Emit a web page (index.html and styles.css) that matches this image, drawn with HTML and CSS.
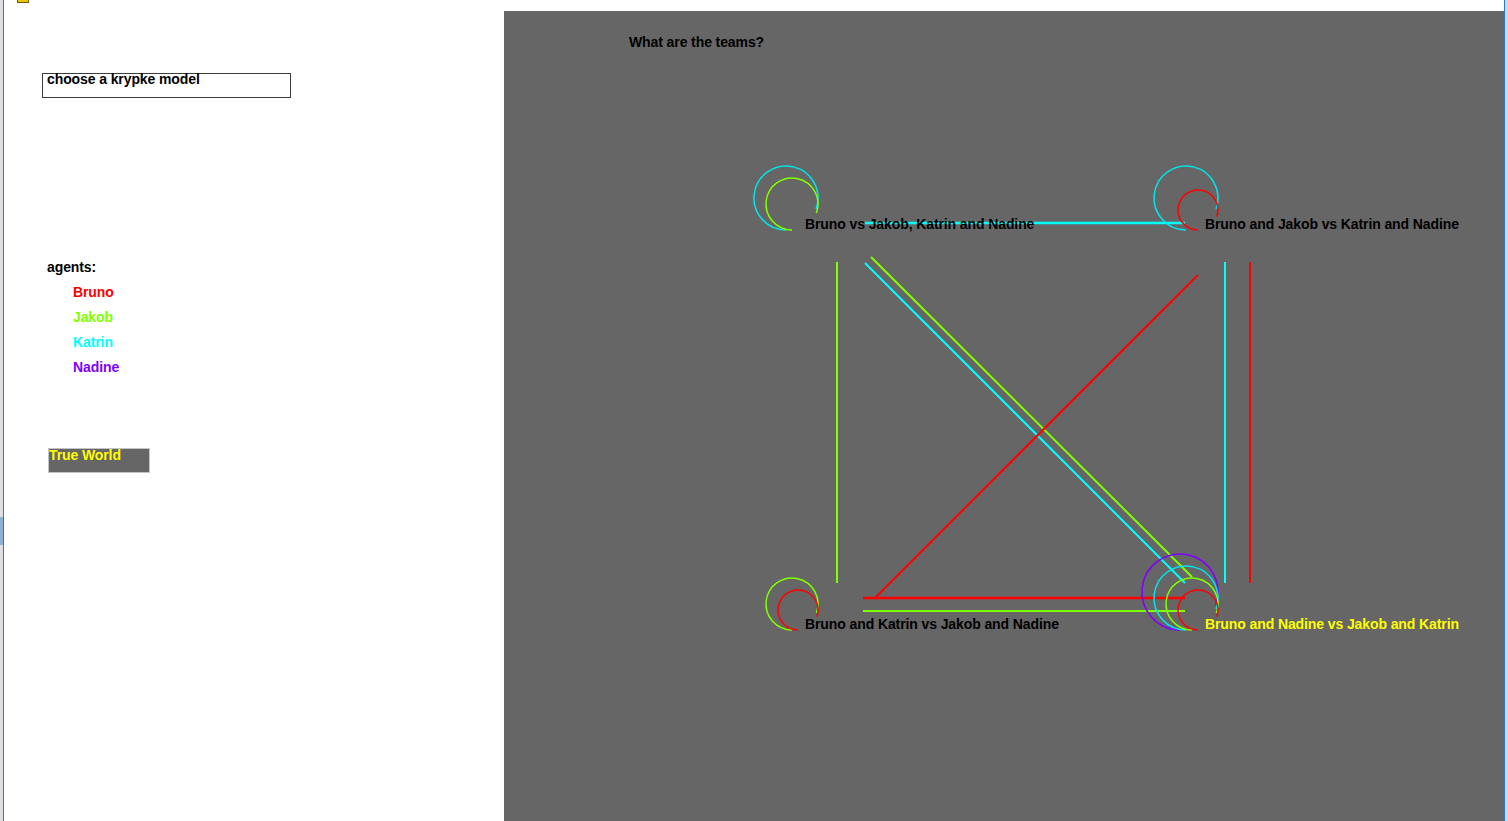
FILE: index.html
```html
<!DOCTYPE html>
<html>
<head>
<meta charset="utf-8">
<title>Krypke model</title>
<link rel="stylesheet" href="styles.css">
</head>
<body>
<div class="window">
  <div class="frame-left">
    <div class="frame-spacer"></div>
    <div class="frame-mark"></div>
  </div>
  <div class="sidebar">
    <div class="app-icon"></div>
    <div class="model-select">choose a krypke model</div>
    <div class="agents">
      <div class="agents-title">agents:</div>
      <ul class="agent-list">
        <li class="agent bruno">Bruno</li>
        <li class="agent jakob">Jakob</li>
        <li class="agent katrin">Katrin</li>
        <li class="agent nadine">Nadine</li>
      </ul>
    </div>
    <div class="true-world">True World</div>
  </div>
  <div class="stage">
    <div class="question">What are the teams?</div>
    <div class="canvas">
      <svg class="edges" width="1000" height="810" viewBox="0 0 1000 810">
        <g stroke-width="2" fill="none">
          <line x1="361" y1="212" x2="681" y2="212" stroke="#00ffff" stroke-width="2.5"/>
          <line x1="333" y1="251" x2="333" y2="572" stroke="#80ff00"/>
          <line x1="721" y1="251" x2="721" y2="572" stroke="#00ffff"/>
          <line x1="746" y1="251" x2="746" y2="572" stroke="#ff0000"/>
          <line x1="359" y1="587" x2="681" y2="587" stroke="#ff0000" stroke-width="2.5"/>
          <line x1="359" y1="600" x2="681" y2="600" stroke="#80ff00"/>
          <line x1="361" y1="252" x2="681" y2="572" stroke="#00ffff"/>
          <line x1="367" y1="246" x2="688" y2="566" stroke="#80ff00"/>
          <line x1="694" y1="264" x2="371" y2="587" stroke="#ff0000"/>
        </g>
        <g stroke-width="1.5" fill="none">
          <path d="M 282 219 A 32 32 0 1 1 312.07 197.94" stroke="#00e5ee"/>
          <path d="M 288 219 A 26 26 0 1 1 312.43 201.89" stroke="#80ff00"/>
          <path d="M 682 219 A 32 32 0 1 1 712.07 197.94" stroke="#00e5ee"/>
          <path d="M 694 219 A 20 20 0 1 1 712.79 205.84" stroke="#ff0000"/>
          <path d="M 288 619 A 26 26 0 1 1 312.43 601.89" stroke="#80ff00"/>
          <path d="M 294 619 A 20 20 0 1 1 312.79 605.84" stroke="#ff0000"/>
          <path d="M 676 619 A 38 38 0 1 1 711.71 594" stroke="#8000ff"/>
          <path d="M 682 619 A 32 32 0 1 1 712.07 597.94" stroke="#00e5ee"/>
          <path d="M 688 619 A 26 26 0 1 1 712.43 601.89" stroke="#80ff00"/>
          <path d="M 694 619 A 20 20 0 1 1 712.79 605.84" stroke="#ff0000"/>
        </g>
      </svg>
      <div class="world w-top-left">Bruno vs Jakob, Katrin and Nadine</div>
      <div class="world w-top-right">Bruno and Jakob vs Katrin and Nadine</div>
      <div class="world w-bottom-left">Bruno and Katrin vs Jakob and Nadine</div>
      <div class="world w-bottom-right actual">Bruno and Nadine vs Jakob and Katrin</div>
    </div>
  </div>
  <div class="frame-right"></div>
</div>
</body>
</html>
```

FILE: styles.css
```css
html, body {
  margin: 0;
  padding: 0;
  background: #ffffff;
}

body {
  font-family: "Liberation Sans", Arial, sans-serif;
  font-weight: bold;
  font-size: 14px;
  letter-spacing: -0.1px;
  color: #000;
  overflow: hidden;
}

.window {
  display: flex;
  width: 1508px;
  height: 821px;
}

.frame-left {
  width: 3px;
  border-right: 1px solid #2a78d0;
  background: #dedfe2;
  display: flex;
  flex-direction: column;
}

.frame-spacer {
  height: 517px;
}

.frame-mark {
  height: 28px;
  background: #8fb0d4;
}

.sidebar {
  width: 500px;
  background: #ffffff;
  display: flex;
  flex-direction: column;
  align-items: flex-start;
}

.app-icon {
  margin-left: 13px;
  width: 10px;
  height: 2px;
  background: #e8c800;
  border: 1px solid #6b5a00;
  border-top: none;
  box-sizing: content-box;
}

.model-select {
  margin-top: 70px;
  margin-left: 38px;
  width: 249px;
  height: 25px;
  box-sizing: border-box;
  border: 1.5px solid #3c3c3c;
  padding-left: 4px;
  line-height: 11px;
  white-space: nowrap;
}

.agents {
  margin-top: 157px;
  margin-left: 43px;
}

.agents-title {
  line-height: 25px;
}

.agent-list {
  list-style: none;
  margin: 0;
  padding: 0 0 0 26px;
}

.agent {
  line-height: 25px;
}

.bruno { color: #ff0000; }
.jakob { color: #80ff00; }
.katrin { color: #00ffff; }
.nadine { color: #8000ff; }

.true-world {
  margin-top: 68px;
  margin-left: 44px;
  width: 102px;
  height: 25px;
  box-sizing: border-box;
  background: #666666;
  border: 1px solid #c4c4c4;
  color: #ffff00;
  line-height: 12px;
  white-space: nowrap;
}

.stage {
  position: relative;
  margin-top: 11px;
  width: 1000px;
  height: 810px;
  background: #666666;
}

.question {
  padding-top: 24px;
  padding-left: 125px;
  line-height: 14px;
}

.canvas {
  position: absolute;
  left: 0;
  top: 0;
  width: 1000px;
  height: 810px;
}

.edges {
  position: absolute;
  left: 0;
  top: 0;
  display: block;
}

.world {
  position: absolute;
  line-height: 14px;
  white-space: nowrap;
  color: #000;
}

.w-top-left { left: 301px; top: 206px; }
.w-top-right { left: 701px; top: 206px; }
.w-bottom-left { left: 301px; top: 606px; }
.w-bottom-right { left: 701px; top: 606px; }

.actual { color: #ffff00; }

.frame-right {
  width: 3px;
  border-left: 1px solid #2a78d0;
  background: #d6d6da;
}
```
